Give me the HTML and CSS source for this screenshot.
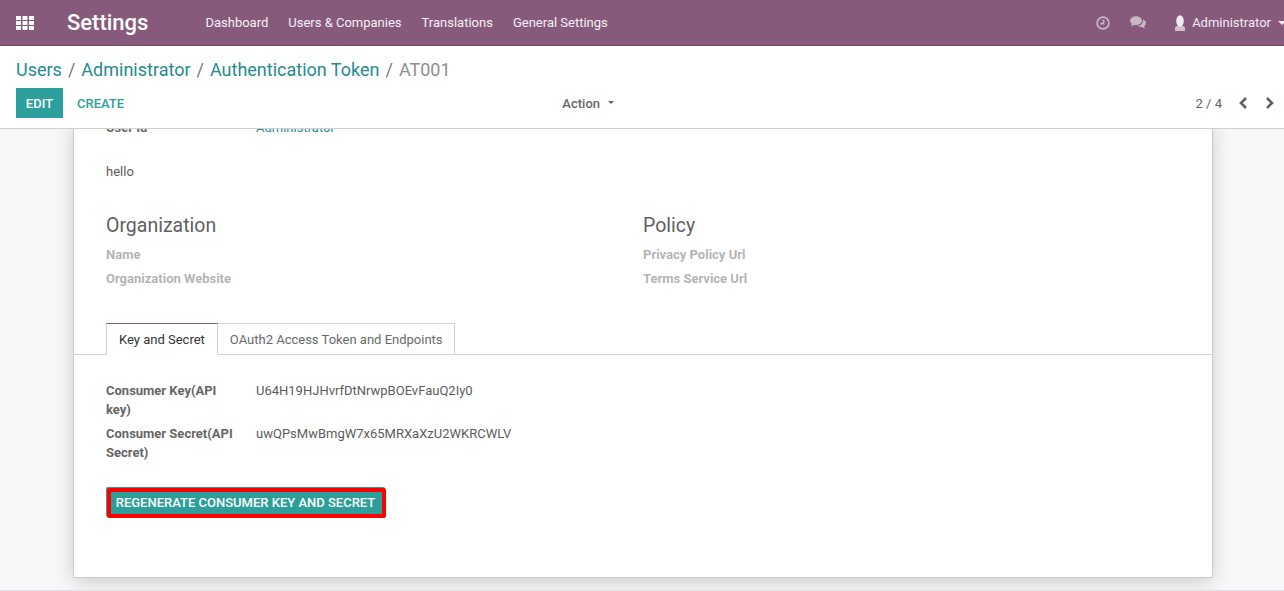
FILE: index.html
```html
<!DOCTYPE html>
<html lang="en">
<head>
    <meta charset="UTF-8" />
    <title>Settings</title>
    <link rel="stylesheet" href="styles.css">
</head>
<body>
    <header class="navbar">
        <div class="nav-left">
            <svg class="apps-icon" width="18" height="14" viewBox="0 0 18 14" fill="#fff">
                <rect x="0" y="0" width="5" height="4"/><rect x="6.5" y="0" width="5" height="4"/><rect x="13" y="0" width="5" height="4"/>
                <rect x="0" y="5" width="5" height="4"/><rect x="6.5" y="5" width="5" height="4"/><rect x="13" y="5" width="5" height="4"/>
                <rect x="0" y="10" width="5" height="4"/><rect x="6.5" y="10" width="5" height="4"/><rect x="13" y="10" width="5" height="4"/>
            </svg>
            <span class="brand">Settings</span>
            <nav class="menu">
                <a>Dashboard</a>
                <a>Users &amp; Companies</a>
                <a>Translations</a>
                <a>General Settings</a>
            </nav>
        </div>
        <div class="nav-right">
            <svg class="systray clock" width="14" height="14" viewBox="0 0 14 14" fill="none" stroke="#c9b8c4" stroke-width="1.6">
                <circle cx="7" cy="7" r="5.9"/>
                <path d="M7.6 3.4V7.6H4.4"/>
            </svg>
            <svg class="systray chat" width="16" height="13" viewBox="0 0 16 13" fill="#c9b8c4">
                <ellipse cx="6" cy="4.6" rx="6" ry="4.4"/>
                <path d="M2 7L1.4 10.6L5.6 8Z"/>
                <path d="M13 3.4C15 4.4 16 5.6 16 7C16 8.3 15.2 9.3 14 10L15 12.6L11 10.8C9.6 10.8 8.2 10.4 7.2 9.8C10.6 9.8 13.6 7.6 13 3.4Z"/>
            </svg>
            <span class="user">
                <svg width="12" height="16" viewBox="0 0 12 16">
                    <path d="M3.6 10.5L1 12.6V16H11V12.6L8.4 10.5Z" fill="#cfc3cb"/>
                    <ellipse cx="6" cy="6" rx="3.8" ry="5.8" fill="#f0ecef"/>
                </svg>
                <span>Administrator</span>
                <span class="user-caret"></span>
            </span>
        </div>
    </header>

    <section class="control-panel">
        <ol class="breadcrumb">
            <li><a>Users</a></li>
            <li class="sep">/</li>
            <li><a>Administrator</a></li>
            <li class="sep">/</li>
            <li><a>Authentication Token</a></li>
            <li class="sep">/</li>
            <li class="current">AT001</li>
        </ol>
        <div class="cp-row">
            <div class="cp-buttons">
                <button class="btn-primary">EDIT</button>
                <button class="btn-link">CREATE</button>
            </div>
            <div class="cp-action">Action <span class="caret"></span></div>
            <div class="pager">
                <span class="pager-value">2 / 4</span>
                <svg class="pager-prev" width="10" height="12" viewBox="0 0 10 12" fill="none" stroke="#5a6470" stroke-width="2.6"><path d="M8 1L3 6L8 11"/></svg>
                <svg class="pager-next" width="10" height="12" viewBox="0 0 10 12" fill="none" stroke="#5a6470" stroke-width="2.6"><path d="M2 1L7 6L2 11"/></svg>
            </div>
        </div>
    </section>

    <main class="content">
        <div class="sheet">
            <div class="field-row">
                <div class="field-label">User Id</div>
                <div class="field-value"><a>Administrator</a></div>
            </div>
            <p class="note">hello</p>

            <div class="groups">
                <div class="group">
                    <h3>Organization</h3>
                    <div class="muted-label">Name</div>
                    <div class="muted-label">Organization Website</div>
                </div>
                <div class="group">
                    <h3>Policy</h3>
                    <div class="muted-label">Privacy Policy Url</div>
                    <div class="muted-label">Terms Service Url</div>
                </div>
            </div>

            <ul class="tabs">
                <li class="tab active">Key and Secret</li>
                <li class="tab">OAuth2 Access Token and Endpoints</li>
            </ul>

            <div class="tab-pane">
                <div class="field-row">
                    <div class="field-label">Consumer Key(API key)</div>
                    <div class="field-value">U64H19HJHvrfDtNrwpBOEvFauQ2Iy0</div>
                </div>
                <div class="field-row">
                    <div class="field-label">Consumer Secret(API Secret)</div>
                    <div class="field-value">uwQPsMwBmgW7x65MRXaXzU2WKRCWLV</div>
                </div>
                <button class="btn-regenerate">REGENERATE CONSUMER KEY AND SECRET</button>
            </div>
        </div>
    </main>
</body>
</html>
```

FILE: styles.css
```css
html, body {
    height: 100%;
}
body {
    margin: 0;
    display: flex;
    flex-direction: column;
    height: 591px;
    overflow: hidden;
    font-family: Roboto, "Noto Sans", sans-serif;
    font-size: 13px;
    line-height: 19px;
    color: #5c5c5c;
    background-color: #fff;
}
a {
    color: #278a8e;
}
button {
    font-family: inherit;
    border: none;
    cursor: pointer;
}

/* top bar */
.navbar {
    flex: none;
    display: flex;
    justify-content: space-between;
    height: 45px;
    overflow: hidden;
    background-color: #875a7b;
    border-bottom: 1px solid #6e4a65;
    color: #fff;
}
.nav-left, .nav-right {
    display: flex;
    align-items: center;
}
.apps-icon {
    margin-left: 16px;
}
.brand {
    margin-left: 33px;
    font-size: 22px;
    line-height: 45px;
    font-weight: 500;
}
.menu {
    display: flex;
    gap: 20px;
    margin-left: 57px;
}
.menu a {
    color: #fff;
    opacity: 0.92;
}
.nav-right {
    margin-right: -2px;
}
.clock {
    margin-right: 20px;
}
.chat {
    margin-right: 28px;
}
.user {
    display: flex;
    align-items: center;
    gap: 6px;
    color: #f1ebef;
}
.user-caret {
    margin-left: 1px;
    border-top: 4px solid #f1ebef;
    border-left: 4px solid transparent;
    border-right: 4px solid transparent;
}

/* control panel */
.control-panel {
    flex: none;
    height: 83px;
    box-sizing: border-box;
    padding: 12px 16px 0;
    border-bottom: 1px solid #cfcfcf;
}
.breadcrumb {
    display: flex;
    gap: 6px;
    margin: 0;
    padding: 0;
    list-style: none;
    font-size: 18px;
    line-height: 24px;
}
.breadcrumb .sep {
    color: #777;
}
.breadcrumb .current {
    color: #8f8f8f;
}
.cp-row {
    display: grid;
    grid-template-columns: 1fr 1fr 1fr;
    align-items: center;
    margin-top: 6px;
    height: 30px;
}
.cp-buttons {
    display: flex;
    align-items: center;
}
.btn-primary {
    height: 30px;
    width: 47px;
    padding: 0;
    background-color: #2ca09c;
    color: #fff;
    font-size: 13px;
    font-weight: 500;
}
.btn-link {
    height: 30px;
    margin-left: 2px;
    padding: 0 12px;
    background: none;
    color: #2ca09c;
    font-size: 13px;
    font-weight: 500;
}
.cp-action {
    padding-left: 129px;
    font-weight: 500;
    color: #666;
}
.caret {
    display: inline-block;
    margin-left: 5px;
    vertical-align: 4px;
    border-top: 3px solid #666;
    border-left: 3.5px solid transparent;
    border-right: 3.5px solid transparent;
}
.pager {
    display: flex;
    justify-content: flex-end;
    align-items: center;
    margin-right: -7px;
    color: #5a6470;
}
.pager-prev {
    margin-left: 16px;
}
.pager-next {
    margin-left: 17px;
}

/* scrolled form area */
.content {
    flex: 1;
    overflow: hidden;
    background-color: #f8f8f8;
    border-bottom: 1px solid #e0e0e6;
}
.sheet {
    box-sizing: border-box;
    width: 1140px;
    height: 460px;
    margin: -11px 0 0 73px;
    padding: 0 32px;
    background-color: #fff;
    border: 1px solid #c8ccd0;
    border-top: none;
    box-shadow: 0 5px 20px -1px rgba(0, 0, 0, 0.19);
}
.field-row {
    display: flex;
    margin-bottom: 5px;
}
.field-label {
    flex: none;
    width: 150px;
    padding-right: 15px;
    box-sizing: border-box;
    font-weight: 700;
    color: #666;
}
.note {
    margin: 25px 0 0;
}
.groups {
    display: grid;
    grid-template-columns: 537px 1fr;
    margin-top: 31px;
}
.group h3 {
    margin: 0 0 5px;
    font-size: 19.5px;
    line-height: 28px;
    font-weight: 400;
    color: #5f5f5f;
}
.muted-label {
    margin-bottom: 5px;
    font-weight: 700;
    color: #b5b5b5;
}

/* tabs */
.tabs {
    display: flex;
    margin: 30px -32px 0;
    padding: 0 32px;
    list-style: none;
    border-bottom: 1px solid #ced4da;
}
.tab {
    box-sizing: border-box;
    height: 32px;
    margin-bottom: -1px;
    padding: 6px 12px;
    color: #6a6a6a;
    border: 1px solid #ced4da;
    border-left: none;
}
.tab:last-child {
    padding-right: 11px;
}
.tab.active {
    color: #333;
    background-color: #fff;
    border-left: 1px solid #ced4da;
    border-top-color: #875a7b;
    border-bottom-color: #fff;
}
.tab-pane {
    padding-top: 26px;
}
.btn-regenerate {
    display: block;
    box-sizing: border-box;
    width: 279px;
    height: 30px;
    margin: 26px 0 0 1px;
    padding: 0 2px 2px 0;
    background-color: #2e9e9a;
    color: #fff;
    font-size: 13px;
    font-weight: 500;
    border: 4px solid #f00;
    border-radius: 2px;
    box-shadow: -1px -1px 0 #2e9e9a;
}
```
